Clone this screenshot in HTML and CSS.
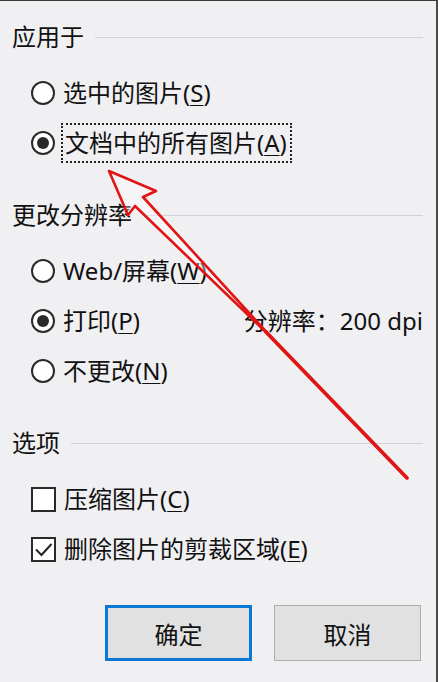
FILE: index.html
```html
<!DOCTYPE html>
<html lang="zh-CN">
<head>
<meta charset="utf-8">
<title>压缩图片</title>
<link rel="stylesheet" href="styles.css">
</head>
<body>
<div class="dialog">
  <section class="group">
    <div class="group-title"><span>应用于</span><span class="rule"></span></div>
    <div class="options">
      <div class="option"><span class="radio"></span><span class="label">选中的图片(<u>S</u>)</span></div>
      <div class="option"><span class="radio checked"></span><span class="label focus">文档中的所有图片(<u>A</u>)</span></div>
    </div>
  </section>

  <section class="group">
    <div class="group-title"><span>更改分辨率</span><span class="rule"></span></div>
    <div class="options">
      <div class="option"><span class="radio"></span><span class="label">Web/屏幕(<u>W</u>)</span></div>
      <div class="option"><span class="radio checked"></span><span class="label">打印(<u>P</u>)</span><span class="resolution">分辨率：200 dpi</span></div>
      <div class="option"><span class="radio"></span><span class="label">不更改(<u>N</u>)</span></div>
    </div>
  </section>

  <section class="group">
    <div class="group-title"><span>选项</span><span class="rule"></span></div>
    <div class="options">
      <div class="option"><span class="check"></span><span class="label">压缩图片(<u>C</u>)</span></div>
      <div class="option"><span class="check checked"><svg viewBox="0 0 25 25" width="25" height="25"><path d="M5 12.5 L10.5 18 L20.5 7" fill="none" stroke="#222" stroke-width="2"/></svg></span><span class="label">删除图片的剪裁区域(<u>E</u>)</span></div>
    </div>
  </section>

  <div class="buttons">
    <button class="btn primary">确定</button>
    <button class="btn">取消</button>
  </div>

  <svg class="annotation" viewBox="0 0 438 682" width="438" height="682">
    <path d="M109 171 L156 191 L143 197 L272 338 L135 206 L128 215 Z" fill="rgba(255,255,255,0.35)" stroke="#e01515" stroke-width="2.6" stroke-linejoin="round"/>
    <path d="M266 332 L407 478" stroke="#e01515" stroke-width="3.8" stroke-linecap="round"/>
  </svg>
</div>
</body>
</html>
```

FILE: styles.css
```css
html, body {
  margin: 0;
  padding: 0;
  background: #f0eff1;
}

.dialog {
  position: relative;
  width: 438px;
  height: 682px;
  box-sizing: border-box;
  border-top: 1px solid #3a3a3a;
  border-right: 2px solid #4a4a4a;
  padding: 22px 13px 0 12px;
  font-family: "Noto Sans", "Noto Sans CJK SC", sans-serif;
  font-size: 24px;
  color: #111;
  overflow: hidden;
}

.group + .group {
  margin-top: 33px;
}

.group-title {
  display: flex;
  align-items: center;
  height: 28px;
  line-height: 28px;
  white-space: nowrap;
}

.rule {
  flex: 1;
  height: 1px;
  background: #d2d2d4;
  margin-left: 11px;
}

.options {
  padding-top: 17px;
  padding-left: 19px;
}

.option {
  display: flex;
  align-items: center;
  height: 50px;
  white-space: nowrap;
}

.radio {
  width: 24px;
  height: 24px;
  box-sizing: border-box;
  border: 2px solid #2a2a2a;
  border-radius: 50%;
  background: #fff;
  display: flex;
  align-items: center;
  justify-content: center;
  flex-shrink: 0;
}

.radio.checked::after {
  content: "";
  width: 12px;
  height: 12px;
  border-radius: 50%;
  background: #2a2a2a;
}

.check {
  width: 25px;
  height: 25px;
  box-sizing: border-box;
  border: 2px solid #2a2a2a;
  background: #fff;
  position: relative;
  flex-shrink: 0;
}

.check svg {
  position: absolute;
  left: -2px;
  top: -2px;
}

.label {
  margin-left: 8px;
  line-height: 36px;
}

.label u {
  text-decoration-thickness: 1px;
  text-underline-offset: 3px;
}

.label.focus {
  margin-left: 6px;
  padding: 0 3px 0 2px;
  border: 2px dotted #222;
  line-height: 36px;
}

.resolution {
  margin-left: auto;
  margin-top: -4px;
}

.buttons {
  display: flex;
  justify-content: flex-end;
  gap: 22px;
  margin-top: 31px;
  margin-right: 2px;
}

.btn {
  width: 147px;
  height: 56px;
  box-sizing: border-box;
  background: #e1e1e1;
  border: 1px solid #adadad;
  font-family: "Noto Sans CJK SC", sans-serif;
  font-size: 24px;
  color: #111;
  padding: 0;
}

.btn.primary {
  border: 3px solid #0a78d4;
}

.annotation {
  position: absolute;
  left: 0;
  top: -1px;
  pointer-events: none;
}
```
